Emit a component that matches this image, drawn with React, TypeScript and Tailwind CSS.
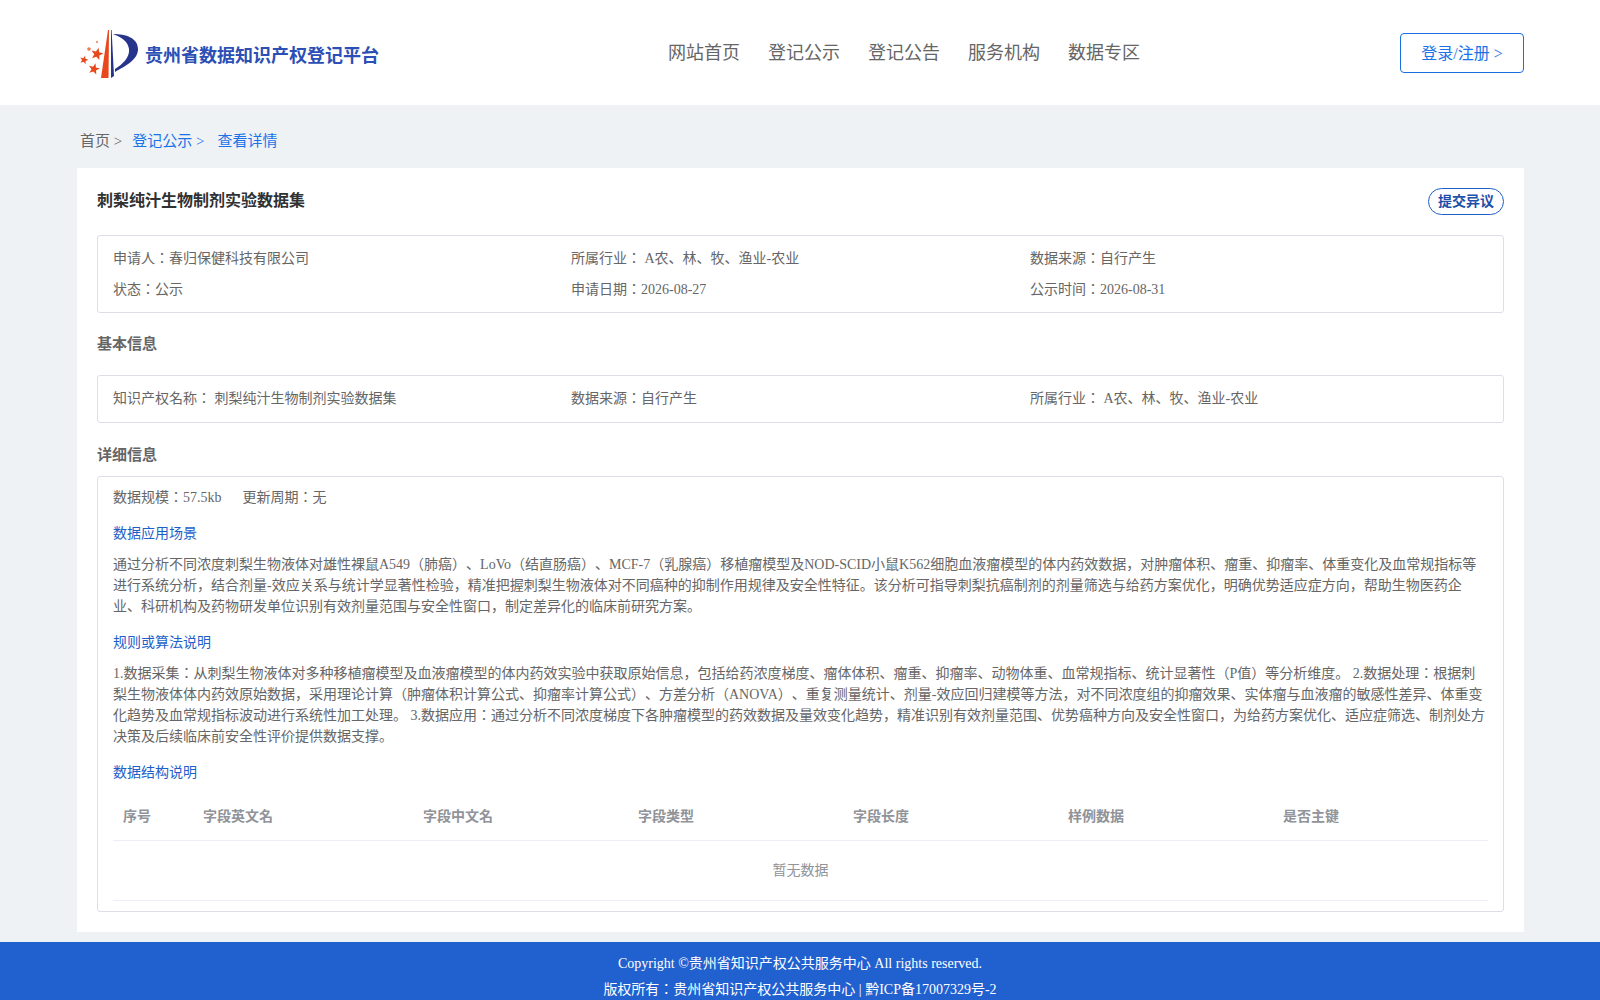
function Star({ cx, cy, r }: { cx: number; cy: number; r: number }) {
  const points = Array.from({ length: 10 }, (_, i) => {
    const radius = i % 2 === 0 ? r : r * 0.42;
    const angle = (Math.PI / 5) * i - Math.PI / 2 + 0.25;
    return `${cx + radius * Math.cos(angle)},${cy + radius * Math.sin(angle)}`;
  }).join(" ");
  return <polygon points={points} fill="#e8481c" />;
}

function Logo() {
  return (
    <svg width="60" height="52" viewBox="0 -2 60 52" className="shrink-0">
      <path d="M28 1 L29 1 L28.5 49 L21 49 Z" fill="#e8481c" />
      <path d="M31 1 L31.6 1 L34 47 L31 49 Z" fill="#27348b" />
      <path d="M33 5 C46 5 58 9 58 20 C58 31 45 37 35 43 L35 40 C43 35 50 28 49 20 C48 12 41 8 33 5 Z" fill="#27348b" />
      <Star cx={17} cy={25} r={6.5} />
      <Star cx={4} cy={31} r={4.5} />
      <Star cx={14} cy={40} r={6} />
      <circle cx="9" cy="20" r="1.8" fill="#ee7a50" />
      <circle cx="17" cy="13" r="1" fill="#ee7a50" />
    </svg>
  );
}

const navItems = ["网站首页", "登记公示", "登记公告", "服务机构", "数据专区"];
const columns = ["字段英文名", "字段中文名", "字段类型", "字段长度", "样例数据", "是否主键"];

export default function App() {
  return (
    <div className="min-h-screen bg-[#eff2f5] text-[14px] text-[#666666] [text-spacing-trim:space-all] font-['Liberation_Serif','Noto_Sans_CJK_JP',serif]">
      <header className="h-[105px] bg-white flex items-center pl-[80px] pr-[76px]">
        <div className="flex items-center gap-[5px] w-[588px]">
          <Logo />
          <span className="text-[18px] font-bold text-[#2b4fb5] mt-[7px]">贵州省数据知识产权登记平台</span>
        </div>
        <nav className="flex gap-[28px] text-[18px] text-[#666666] mt-[1px]">
          {navItems.map((n) => (
            <span key={n}>{n}</span>
          ))}
        </nav>
        <button className="ml-auto w-[124px] h-[40px] pt-[2px] border border-[#1a6fe0] rounded text-[16px] text-[#1a73e8] bg-white">
          登录/注册 &gt;
        </button>
      </header>

      <div className="h-[63px] pl-[80px] flex items-center text-[15px] pt-[10px]">
        <span>首页 &gt;</span>
        <span className="ml-[10px] text-[#1a73e8]">登记公示 &gt;</span>
        <span className="ml-[13px] text-[#1a73e8]">查看详情</span>
      </div>

      <main className="ml-[77px] mr-[76px] bg-white px-[20px] pt-[20px] pb-[20px] h-[764px]">
        <div className="flex items-start justify-between h-[47px]">
          <h1 className="text-[16px] font-bold text-[#303133] leading-[26px]">刺梨纯汁生物制剂实验数据集</h1>
          <span className="w-[76px] h-[27px] flex items-center justify-center border border-[#1d5fc9] rounded-[14px] text-[14px] font-bold text-[#1d4fa8]">
            提交异议
          </span>
        </div>

        <section className="border border-[#dcdfe6] rounded-[3px] px-[15px] pt-[13px] h-[78px]">
          <div className="grid grid-cols-[458px_459px_1fr] gap-y-[11px] leading-[20px]">
            <span>申请人：春归保健科技有限公司</span>
            <span>所属行业： A农、林、牧、渔业-农业</span>
            <span>数据来源：自行产生</span>
            <span>状态：公示</span>
            <span>申请日期：2026-08-27</span>
            <span>公示时间：2026-08-31</span>
          </div>
        </section>

        <h2 className="text-[15px] font-bold mt-[20px] mb-[20px] leading-[22px]">基本信息</h2>

        <section className="border border-[#dcdfe6] rounded-[3px] px-[15px] h-[48px] flex items-center">
          <div className="grid grid-cols-[458px_459px_1fr] w-full leading-[20px]">
            <span>知识产权名称： 刺梨纯汁生物制剂实验数据集</span>
            <span>数据来源：自行产生</span>
            <span>所属行业： A农、林、牧、渔业-农业</span>
          </div>
        </section>

        <h2 className="text-[15px] font-bold mt-[21px] mb-[10px] leading-[22px]">详细信息</h2>

        <section className="border border-[#dcdfe6] rounded-[3px] px-[15px] pt-[11px] h-[436px]">
          <div className="leading-[20px]">
            数据规模：57.5kb<span className="ml-[21px]">更新周期：无</span>
          </div>
          <h3 className="text-[#1d5fc9] mt-[16px] leading-[20px]">数据应用场景</h3>
          <p className="mt-[10px] leading-[21px]">
            通过分析不同浓度刺梨生物液体对雄性裸鼠A549（肺癌）、LoVo（结直肠癌）、MCF-7（乳腺癌）移植瘤模型及NOD-SCID小鼠K562细胞血液瘤模型的体内药效数据，对肿瘤体积、瘤重、抑瘤率、体重变化及血常规指标等进行系统分析，结合剂量-效应关系与统计学显著性检验，精准把握刺梨生物液体对不同癌种的抑制作用规律及安全性特征。该分析可指导刺梨抗癌制剂的剂量筛选与给药方案优化，明确优势适应症方向，帮助生物医药企业、科研机构及药物研发单位识别有效剂量范围与安全性窗口，制定差异化的临床前研究方案。
          </p>
          <h3 className="text-[#1d5fc9] mt-[16px] leading-[20px]">规则或算法说明</h3>
          <p className="mt-[10px] leading-[21px]">
            1.数据采集：从刺梨生物液体对多种移植瘤模型及血液瘤模型的体内药效实验中获取原始信息，包括给药浓度梯度、瘤体体积、瘤重、抑瘤率、动物体重、血常规指标、统计显著性（P值）等分析维度。 2.数据处理：根据刺梨生物液体体内药效原始数据，采用理论计算（肿瘤体积计算公式、抑瘤率计算公式）、方差分析（ANOVA）、重复测量统计、剂量-效应回归建模等方法，对不同浓度组的抑瘤效果、实体瘤与血液瘤的敏感性差异、体重变化趋势及血常规指标波动进行系统性加工处理。 3.数据应用：通过分析不同浓度梯度下各肿瘤模型的药效数据及量效变化趋势，精准识别有效剂量范围、优势癌种方向及安全性窗口，为给药方案优化、适应症筛选、制剂处方决策及后续临床前安全性评价提供数据支撑。
          </p>
          <h3 className="text-[#1d5fc9] mt-[16px] leading-[20px]">数据结构说明</h3>
          <div className="mt-[10px]">
            <div className="grid grid-cols-[80px_220px_215px_215px_215px_215px_1fr] h-[48px] items-center border-b border-[#ebeef5] font-bold text-[#909399]">
              <span className="pl-[10px]">序号</span>
              {columns.map((c) => (
                <span key={c} className="pl-[10px]">{c}</span>
              ))}
            </div>
            <div className="h-[60px] flex items-center justify-center border-b border-[#ebeef5] text-[#909399]">
              暂无数据
            </div>
          </div>
        </section>
      </main>

      <footer className="mt-[10px] h-[58px] bg-[#2160cf] text-white text-center pt-[9px] overflow-hidden leading-[26px]">
        <div>Copyright ©贵州省知识产权公共服务中心 All rights reserved.</div>
        <div>版权所有：贵州省知识产权公共服务中心 | 黔ICP备17007329号-2</div>
      </footer>
    </div>
  );
}
